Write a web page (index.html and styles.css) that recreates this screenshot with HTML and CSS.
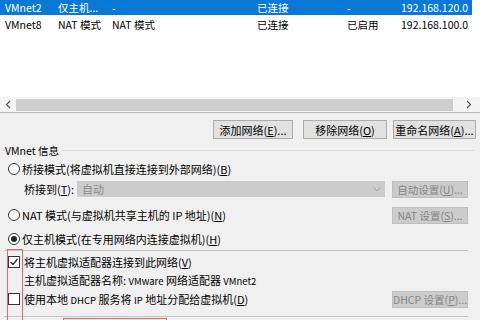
FILE: index.html
```html
<!DOCTYPE html>
<html lang="zh-CN">

<head>
    <meta charset="UTF-8">
    <title>虚拟网络编辑器</title>
    <link rel="stylesheet" href="styles.css">
</head>

<body>

    <!-- Lista de redes -->
    <div class="lista">
        <div class="filas">
            <div class="fila seleccionada">
                <span>VMnet2</span><span>仅主机...</span><span>-</span><span>已连接</span><span>-</span><span>192.168.120.0</span>
            </div>
            <div class="fila">
                <span>VMnet8</span><span>NAT 模式</span><span>NAT 模式</span><span>已连接</span><span>已启用</span><span>192.168.100.0</span>
            </div>
        </div>
        <div class="hscroll">
            <div class="flecha">
                <svg width="6" height="9" viewBox="0 0 6 9"><path d="M5 1 L1.5 4.5 L5 8" fill="none" stroke="#555" stroke-width="1.2"/></svg>
            </div>
            <div class="pulgar"></div>
            <div class="flecha derecha">
                <svg width="6" height="9" viewBox="0 0 6 9"><path d="M1 1 L4.5 4.5 L1 8" fill="none" stroke="#555" stroke-width="1.2"/></svg>
            </div>
        </div>
    </div>

    <!-- Botones -->
    <div class="barra">
        <button class="b1">添加网络(<u>E</u>)...</button>
        <button class="b2">移除网络(<u>O</u>)</button>
        <button class="b3">重命名网络(<u>A</u>)...</button>
    </div>

    <!-- Info VMnet -->
    <div class="grupo-titulo"><span>VMnet 信息</span></div>

    <div class="opcion">
        <span class="radio"></span>
        <span>桥接模式(将虚拟机直接连接到外部网络)(<u>B</u>)</span>
    </div>

    <div class="opcion sub">
        <span class="etiqueta">桥接到(<u>T</u>):</span>
        <div class="combo">
            <span>自动</span>
            <svg width="8" height="5" viewBox="0 0 8 5"><path d="M0.5 0.5 L4 4 L7.5 0.5" fill="none" stroke="#a8a8a8" stroke-width="1"/></svg>
        </div>
        <button class="deshabilitado">自动设置(<u>U</u>)...</button>
    </div>

    <div class="opcion nat">
        <span class="radio"></span>
        <span>NAT 模式(与虚拟机共享主机的 IP 地址)(<u>N</u>)</span>
        <button class="deshabilitado">NAT 设置(<u>S</u>)...</button>
    </div>

    <div class="opcion solo">
        <span class="radio marcado"></span>
        <span>仅主机模式(在专用网络内连接虚拟机)(<u>H</u>)</span>
    </div>

    <div class="separador"></div>

    <div class="opcion chk1">
        <span class="check">
            <svg width="10" height="10" viewBox="0 0 10 10"><path d="M1.5 5 L4 7.5 L8.5 2" fill="none" stroke="#222" stroke-width="1.2"/></svg>
        </span>
        <span>将主机虚拟适配器连接到此网络(<u>V</u>)</span>
    </div>

    <div class="texto-sub">主机虚拟适配器名称: <span class="chico">VMware</span> 网络适配器 <span class="chico">VMnet2</span></div>

    <div class="opcion chk2">
        <span class="check"></span>
        <span>使用本地 <span class="chico">DHCP</span> 服务将 <span class="chico">IP</span> 地址分配给虚拟机(<u>D</u>)</span>
        <button class="deshabilitado">DHCP 设置(<u>P</u>)...</button>
    </div>

    <div class="separador final"></div>

    <!-- Marcas rojas -->
    <div class="marca"></div>
    <div class="marca abajo"></div>

</body>

</html>
```

FILE: styles.css
```css
body {
    font-family: "Noto Sans CJK SC", "Microsoft YaHei", sans-serif;
    font-size: 11px;
    color: #000;
    background-color: #f0f0f0;
    margin: 0;
    width: 480px;
    height: 320px;
    overflow: hidden;
    position: relative;
}

u {
    text-decoration: underline;
}

.lista {
    height: 112px;
    background-color: #fff;
    border-bottom: 1px solid #b9b9b9;
    display: flex;
    flex-direction: column;
}

.filas {
    flex: 1;
}

.fila {
    display: grid;
    grid-template-columns: 53px 54px 145px 90px 54px 1fr;
    height: 16px;
    align-items: center;
    padding-left: 5px;
    font-size: 10.5px;
}

.fila.seleccionada {
    height: 15px;
    margin-bottom: 1px;
    margin-right: 8px;
    background-color: #0a78d4;
    color: #fff;
}

.hscroll {
    height: 15px;
    display: flex;
    align-items: center;
    background-color: #f4f4f4;
}

.flecha {
    width: 16px;
    display: flex;
    justify-content: center;
}

.flecha.derecha {
    width: 22px;
    margin-left: auto;
}

.pulgar {
    width: 437px;
    height: 12px;
    background-color: #cdcdcd;
}

.barra {
    display: flex;
    justify-content: flex-end;
    padding-right: 4px;
    margin-top: 7px;
}

button {
    font-family: inherit;
    font-size: 11px;
    height: 19px;
    padding: 0;
    white-space: nowrap;
    color: #000;
    background-color: #e1e1e1;
    border: 1px solid #adadad;
}

.b1 {
    width: 80px;
}

.b2 {
    width: 84px;
    margin-left: 10px;
}

.b3 {
    width: 83px;
    margin-left: 6px;
}

.grupo-titulo {
    display: flex;
    align-items: center;
    height: 12px;
    margin-top: 5px;
    padding: 0 6px 0 2px;
    font-size: 10.5px;
}

.grupo-titulo::before {
    content: "";
    width: 3px;
    border-top: 1px solid #dcdcdc;
}

.grupo-titulo::after {
    content: "";
    flex: 1;
    margin-left: 3px;
    border-top: 1px solid #dcdcdc;
}

.opcion {
    display: flex;
    align-items: center;
    height: 20px;
    padding-left: 8px;
    padding-right: 12px;
    margin-top: 3px;
}

.opcion button {
    margin-left: auto;
}

.opcion.sub {
    padding-left: 24px;
    margin-top: 0;
}

.opcion.nat {
    margin-top: 6px;
}

.opcion.solo {
    margin-top: 4px;
}

.opcion.chk1 {
    margin-top: 1px;
}

.opcion.chk2 {
    margin-top: 1px;
}

.radio {
    width: 12px;
    height: 12px;
    border: 1px solid #333;
    border-radius: 50%;
    background-color: #fff;
    box-sizing: border-box;
    margin-right: 2px;
    display: flex;
    align-items: center;
    justify-content: center;
}

.radio.marcado::after {
    content: "";
    width: 6px;
    height: 6px;
    border-radius: 50%;
    background-color: #222;
}

.check {
    width: 12px;
    height: 12px;
    border: 1px solid #333;
    background-color: #fff;
    box-sizing: border-box;
    margin-right: 4px;
    display: flex;
    align-items: center;
    justify-content: center;
}

.etiqueta {
    width: 53px;
}

.combo {
    width: 308px;
    height: 16px;
    background-color: #cccccc;
    color: #8a8a8a;
    display: flex;
    align-items: center;
    justify-content: space-between;
    padding: 0 4px 0 5px;
    box-sizing: border-box;
}

.deshabilitado {
    width: 76px;
    height: 17px;
    font-size: 10.5px;
    color: #858585;
    background-color: #cccccc;
    border: 1px solid #bfbfbf;
}

.opcion.sub .deshabilitado {
    margin-left: 7px;
}

.separador {
    margin: 1px 12px 0 4px;
    border-top: 1px solid #c4c4c4;
}

.separador.final {
    margin-top: 7px;
}

.texto-sub {
    height: 16px;
    line-height: 16px;
    padding-left: 24px;
}

.chico {
    font-size: 9.5px;
}

/* marcas rojas de la captura, recortadas por el borde inferior */
.marca {
    position: absolute;
    left: 7px;
    top: 249px;
    width: 16px;
    height: 71px;
    border: 1.5px solid #e06a6a;
    border-bottom: none;
    box-sizing: border-box;
}

.marca.abajo {
    left: 63px;
    top: 318px;
    width: 104px;
    height: 2px;
    border-bottom: none;
}
```
